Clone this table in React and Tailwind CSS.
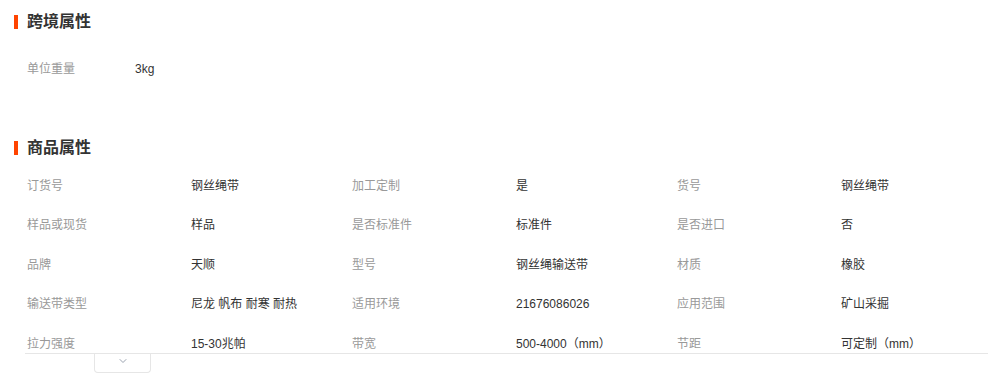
import { ChevronDown } from "lucide-react";

const attrs = [
  ["订货号", "钢丝绳带", "加工定制", "是", "货号", "钢丝绳带"],
  ["样品或现货", "样品", "是否标准件", "标准件", "是否进口", "否"],
  ["品牌", "天顺", "型号", "钢丝绳输送带", "材质", "橡胶"],
  ["输送带类型", "尼龙 帆布 耐寒 耐热", "适用环境", "21676086026", "应用范围", "矿山采掘"],
  ["拉力强度", "15-30兆帕", "带宽", "500-4000（mm）", "节距", "可定制（mm）"],
];

function Title({ children }) {
  return (
    <div className="flex items-center h-[18px] pl-[14px]">
      <span className="w-[4px] h-[14px] bg-[#ff4400]" />
      <span className="ml-[9px] text-[16px] leading-[18px] font-bold text-[#333]">{children}</span>
    </div>
  );
}

export default function App() {
  return (
    <div
      className="w-[988px] h-[374px] overflow-hidden bg-white pt-[13px]"
      style={{ fontFamily: '"Liberation Sans", "Noto Sans CJK SC", sans-serif' }}
    >
      <Title>跨境属性</Title>
      <div className="mt-[28px] flex items-center h-[20px] pl-[27px] text-[12px]">
        <span className="w-[108px] text-[#999]">单位重量</span>
        <span className="text-[#333]">3kg</span>
      </div>

      <div className="mt-[60px]">
        <Title>商品属性</Title>
      </div>

      <div className="ml-[25px] mt-[9px]">
        <div className="h-[188px] overflow-hidden border-b border-[#e6e6e6]">
          {attrs.map((row, i) => (
            <div
              key={i}
              className="grid grid-cols-[164px_161px_164px_161px_164px_1fr] items-center h-[39.5px] pl-[2px] text-[12px]"
            >
              {row.map((cell, j) => (
                <span key={j} className={j % 2 === 0 ? "text-[#999]" : "text-[#333]"}>
                  {cell}
                </span>
              ))}
            </div>
          ))}
        </div>
        <div className="ml-[69px] w-[57px] h-[19px] border border-t-0 border-[#e6e6e6] rounded-b-[4px] flex items-start justify-center pt-[1px]">
          <ChevronDown className="w-[12px] h-[12px] text-[#8c95a3]" strokeWidth={1.75} />
        </div>
      </div>
    </div>
  );
}
